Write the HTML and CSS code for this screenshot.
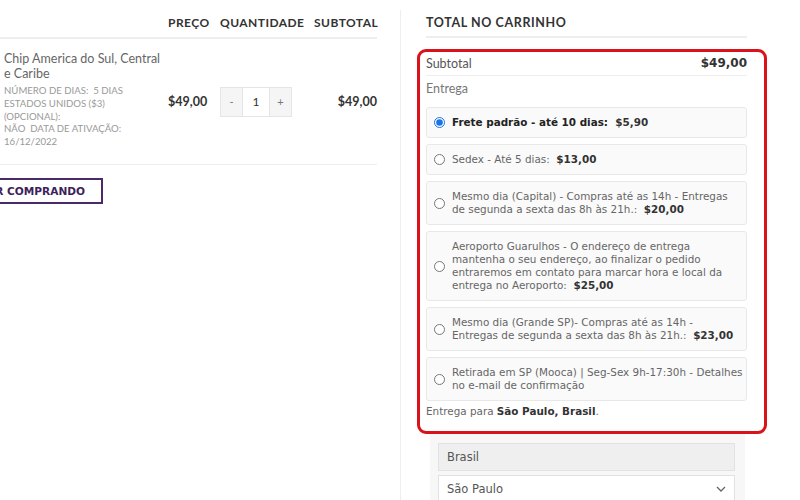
FILE: index.html
```html
<!DOCTYPE html>
<html>
<head>
  <title>Carrinho</title>
  <meta name="viewport" content="width=device-width, initial-scale=1">
  <link rel="stylesheet" href="styles.css">
</head>
<body>
  <div class="page">
    <div class="cart">
      <div class="cart-head">
        <span></span>
        <span>Preço</span>
        <span>Quantidade</span>
        <span class="right">Subtotal</span>
      </div>
      <div class="cart-row">
        <div class="product">
          <div class="product-name">Chip America do Sul, Central e Caribe</div>
          <div class="product-meta">Número de dias:&nbsp; 5 dias Estados Unidos ($3) (opcional):<br>Não&nbsp; Data de ativação: 16/12/2022</div>
        </div>
        <div class="price">$49,00</div>
        <div class="qty">
          <span class="qty-btn">-</span>
          <span class="qty-val">1</span>
          <span class="qty-btn">+</span>
        </div>
        <div class="price right">$49,00</div>
      </div>
      <div class="actions">
        <button class="continue">Continuar comprando</button>
      </div>
    </div>

    <div class="totals">
      <h2>Total no carrinho</h2>
      <div class="highlight">
        <div class="sub-row">
          <span>Subtotal</span>
          <b>$49,00</b>
        </div>
        <div class="ship-label">Entrega</div>
        <ul class="ship-list">
          <li class="ship-opt selected">
            <input type="radio" name="ship" checked>
            <label>Frete padrão - até 10 dias:&nbsp; <b>$5,90</b></label>
          </li>
          <li class="ship-opt">
            <input type="radio" name="ship">
            <label>Sedex - Até 5 dias:&nbsp; <b>$13,00</b></label>
          </li>
          <li class="ship-opt">
            <input type="radio" name="ship">
            <label>Mesmo dia (Capital) - Compras até as 14h - Entregas de segunda a sexta das 8h às 21h.:&nbsp; <b>$20,00</b></label>
          </li>
          <li class="ship-opt">
            <input type="radio" name="ship">
            <label>Aeroporto Guarulhos - O endereço de entrega mantenha o seu endereço, ao finalizar o pedido entraremos em contato para marcar hora e local da entrega no Aeroporto:&nbsp; <b>$25,00</b></label>
          </li>
          <li class="ship-opt">
            <input type="radio" name="ship">
            <label>Mesmo dia (Grande SP)- Compras até as 14h -<br>Entregas de segunda a sexta das 8h às 21h.:&nbsp; <b>$23,00</b></label>
          </li>
          <li class="ship-opt">
            <input type="radio" name="ship">
            <label>Retirada em SP (Mooca) | Seg-Sex 9h-17:30h - Detalhes no e-mail de confirmação</label>
          </li>
        </ul>
        <div class="ship-dest">Entrega para <b>São Paulo, Brasil</b>.</div>
      </div>
      <div class="calc">
        <div class="field filled">Brasil</div>
        <div class="field select">São Paulo
          <svg width="10" height="6" viewBox="0 0 10 6"><path d="M1 1l4 4 4-4" fill="none" stroke="#666" stroke-width="1.3"/></svg>
        </div>
      </div>
    </div>
  </div>
</body>
</html>
```

FILE: styles.css
```css
body {
  margin: 0;
  font-family: Lato, "Liberation Sans", sans-serif;
  color: #555;
  background: #fff;
  overflow: hidden;
}
.page {
  display: flex;
  height: 500px;
  overflow: hidden;
}
.cart {
  width: 377px;
  padding-top: 15px;
}
.cart-head, .cart-row {
  display: grid;
  grid-template-columns: 168px 52px 94px 63px;
}
.cart-head {
  font-weight: 700;
  font-size: 12px;
  letter-spacing: 0.45px;
  text-transform: uppercase;
  color: #333;
  padding-bottom: 7px;
  border-bottom: 2px solid #eee;
}
.right {
  text-align: right;
}
.cart-row {
  align-items: center;
  padding: 12px 0 15px;
  border-bottom: 1px solid #eee;
}
.product {
  padding-left: 4px;
}
.product-name {
  font-size: 12.5px;
  line-height: 15px;
  color: #666;
}
.product-meta {
  margin-top: 4px;
  font-size: 9.6px;
  line-height: 12.8px;
  text-transform: uppercase;
  color: #999;
  width: 140px;
}
.price {
  font-weight: 700;
  font-size: 12.5px;
  color: #333;
  padding-top: 4px;
}
.qty {
  display: flex;
  width: 72px;
  height: 30px;
  margin-top: 4px;
  border: 1px solid #e5e5e5;
  box-sizing: border-box;
  font-size: 11px;
  color: #777;
}
.qty-btn {
  width: 21px;
  background: #f5f5f5;
  display: flex;
  align-items: center;
  justify-content: center;
}
.qty-val {
  flex: 1;
  display: flex;
  align-items: center;
  justify-content: center;
  color: #333;
  font-size: 12px;
  border-left: 1px solid #e5e5e5;
  border-right: 1px solid #e5e5e5;
}
.actions {
  padding-top: 13px;
}
.continue {
  margin-left: -80px;
  padding: 5px 16px 5px 11px;
  border: 2px solid #4b2a6b;
  background: #fff;
  color: #3d1f5c;
  font-family: "DejaVu Sans", sans-serif;
  font-weight: 700;
  font-size: 10.6px;
  text-transform: uppercase;
}
.totals {
  width: 372px;
  margin-left: 23px;
  margin-top: 10px;
  border-left: 1px solid #eee;
  padding-left: 16px;
  box-sizing: border-box;
}
.totals h2 {
  margin: 5px 0 0 9px;
  width: 321px;
  font-size: 12.5px;
  letter-spacing: 0.6px;
  text-transform: uppercase;
  color: #333;
  padding-bottom: 6px;
  border-bottom: 2px solid #eee;
}
.highlight {
  margin-top: 11px;
  border: 3px solid #d9121b;
  border-radius: 9px;
  padding: 1px 17px 14px 6px;
  width: 321px;
}
.sub-row {
  display: flex;
  justify-content: space-between;
  font-size: 12.5px;
  color: #555;
  padding: 3px 0 4px;
  border-bottom: 1px solid #eee;
}
.sub-row b {
  color: #333;
  font-family: "DejaVu Sans", sans-serif;
  font-size: 12px;
}
.ship-label {
  font-size: 12.5px;
  color: #777;
  padding: 5px 0 11px;
}
.ship-list {
  list-style: none;
  margin: 0;
  padding: 0;
  display: flex;
  flex-direction: column;
  gap: 6px;
}
.ship-opt {
  display: flex;
  align-items: center;
  gap: 7px;
  padding: 8px 3px 8px 7px;
  background: #fafafa;
  border: 1px solid #e8e8e8;
  border-radius: 3px;
  font-family: "DejaVu Sans", sans-serif;
  font-size: 10.4px;
  line-height: 13px;
  color: #666;
}
.ship-opt input {
  margin: 0;
  width: 11px;
  height: 11px;
  accent-color: #1a73e8;
  flex-shrink: 0;
}
.ship-opt b {
  color: #333;
}
.ship-opt.selected label {
  font-weight: 700;
  color: #222;
}
.ship-dest {
  margin-top: 4px;
  font-family: "DejaVu Sans", sans-serif;
  font-size: 10.4px;
  color: #666;
}
.ship-dest b {
  color: #333;
}
.calc {
  margin: 0 0 0 13px;
  width: 315px;
  background: #f7f7f7;
  padding: 9px 10px 0 8px;
  box-sizing: border-box;
  height: 100px;
}
.field {
  height: 28px;
  box-sizing: border-box;
  border: 1px solid #e2e2e2;
  padding: 0 8px;
  display: flex;
  align-items: center;
  justify-content: space-between;
  font-family: "DejaVu Sans", sans-serif;
  font-size: 11.5px;
  color: #555;
}
.field.filled {
  background: #efefef;
}
.field.select {
  margin-top: 4px;
  background: #fff;
}
```
